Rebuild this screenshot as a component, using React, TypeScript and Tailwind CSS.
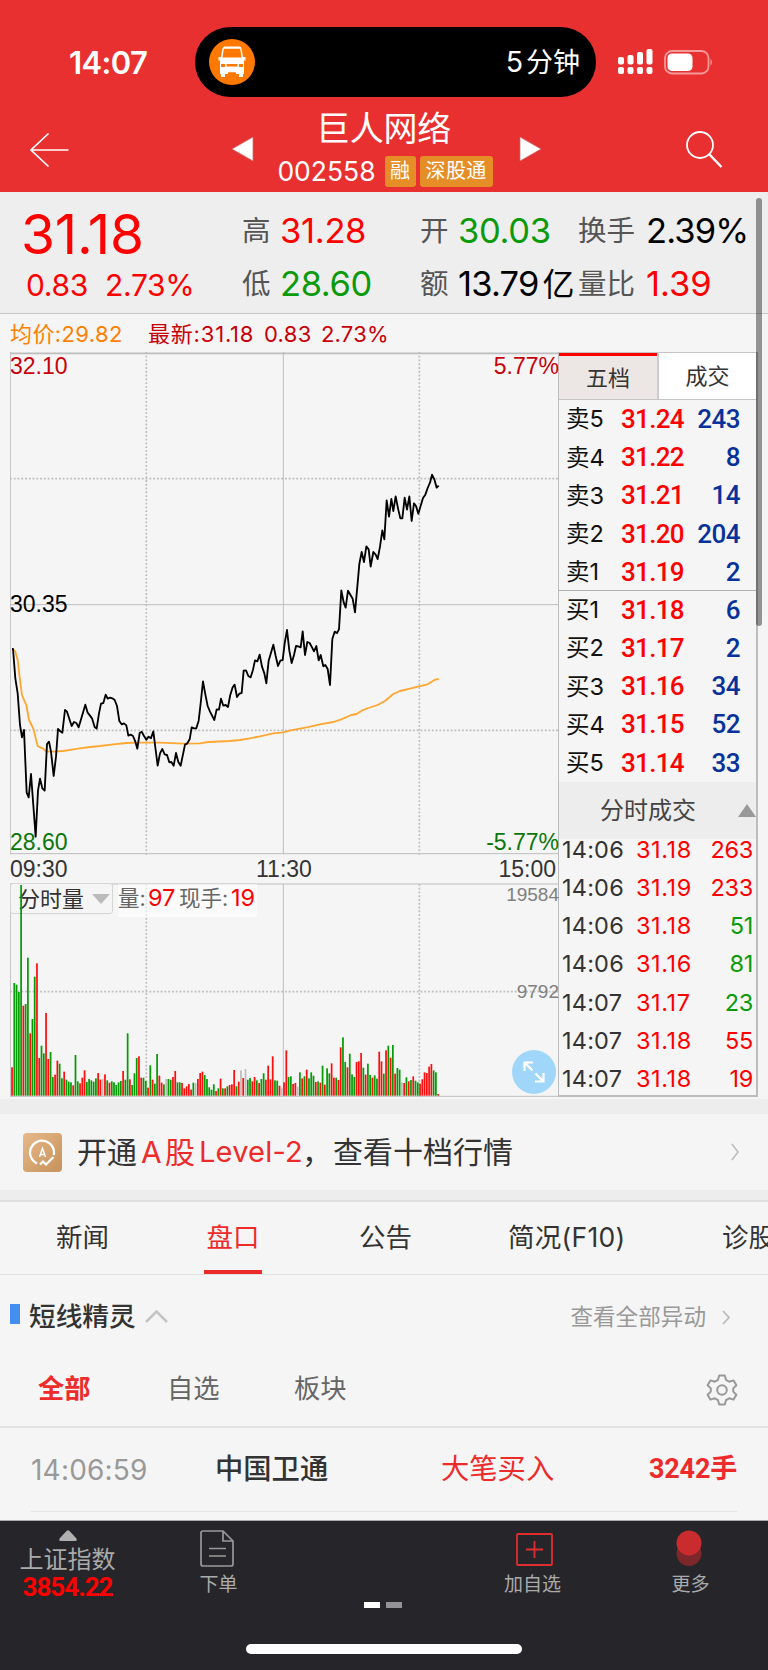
import { ReactNode } from "react";

type Side = "R" | "G" | "N";

const askRows = [
    { label: "卖5", price: "31.24", amount: "243" },
    { label: "卖4", price: "31.22", amount: "8" },
    { label: "卖3", price: "31.21", amount: "14" },
    { label: "卖2", price: "31.20", amount: "204" },
    { label: "卖1", price: "31.19", amount: "2" },
];

const bidRows = [
    { label: "买1", price: "31.18", amount: "6" },
    { label: "买2", price: "31.17", amount: "2" },
    { label: "买3", price: "31.16", amount: "34" },
    { label: "买4", price: "31.15", amount: "52" },
    { label: "买5", price: "31.14", amount: "33" },
];

const trades = [
    { time: "14:06", price: "31.18", amount: "263", up: true },
    { time: "14:06", price: "31.19", amount: "233", up: true },
    { time: "14:06", price: "31.18", amount: "51", up: false },
    { time: "14:06", price: "31.16", amount: "81", up: false },
    { time: "14:07", price: "31.17", amount: "23", up: false },
    { time: "14:07", price: "31.18", amount: "55", up: true },
    { time: "14:07", price: "31.18", amount: "19", up: true },
];

// Chart units are thirds of a pixel
const priceLine =
    "36,147 39,147 46,235 53,280 60,375 66,412 72,390 80,578 86,592 93,522 107,710 114,572 120,536 127,565 134,572 141,432 147,425 153,455 161,528 168,470 174,387 181,394 187,398 195,330 201,335 215,378 222,366 229,369 236,382 256,314 263,338 270,347 276,355 284,381 290,386 297,340 303,311 310,309 317,284 323,296 330,293 337,295 344,300 351,318 358,363 365,373 372,370 379,376 385,407 392,404 399,408 406,425 412,446 419,399 425,395 432,408 439,419 446,410 453,415 460,394 467,450 473,497 480,460 487,447 494,463 501,465 508,487 514,486 521,497 528,459 535,486 542,497 555,434 562,430 569,418 575,382 582,385 589,385 596,362 602,310 609,244 616,283 623,318 630,335 643,360 650,328 657,329 663,296 670,317 677,315 684,321 691,284 698,262 704,254 711,291 718,281 725,279 731,212 738,211 745,228 752,232 759,209 765,181 772,184 779,164 786,200 793,220 799,250 806,182 820,134 827,168 834,198 841,182 848,180 854,130 861,90 868,152 875,189 882,165 888,138 895,139 902,142 908,94 915,165 922,126 929,129 936,142 942,154 949,138 956,181 962,165 970,199 976,195 983,207 990,255 997,117 1004,95 1011,99 1017,88 1024,-29 1031,7 1037,23 1044,-28 1051,-16 1058,-4 1065,37 1072,-40 1078,-108 1085,-144 1092,-114 1099,-161 1106,-152 1112,-100 1120,-144 1127,-136 1133,-123 1140,-160 1147,-209 1153,-182 1160,-299 1167,-250 1174,-303 1180,-267 1187,-311 1194,-275 1201,-245 1207,-245 1214,-307 1221,-271 1228,-311 1235,-237 1242,-290 1248,-282 1255,-259 1269,-306 1276,-316 1283,-336 1290,-352 1296,-376 1303,-362 1310,-337 1316,-343";

const averageLine =
    "39,147 46,155 53,180 60,240 66,285 73,302 79,315 87,360 96,378 101,388 107,415 113,438 122,443 130,446 138,454 160,455 190,453 220,448 240,445 270,441 300,438 340,433 380,429 410,428 480,428 550,431 600,430 625,426 690,423 720,420 750,415 780,409 820,400 850,397 868,392 920,382 960,373 1000,366 1024,358 1054,345 1070,342 1085,332 1105,324 1133,315 1155,303 1180,282 1200,273 1230,266 1257,259 1280,254 1305,239 1316,237";

const volumes =
    "R85 G338 G333 G311 G632 R270 G275 G414 R187 G230 G357 R397 R113 G150 G127 R248 R110 G131 G56 R63 R105 G96 G52 R72 G48 G42 G40 R31 G122 G43 R37 R54 R76 G41 G50 G46 G42 G52 R68 R48 N50 R64 G46 R39 G43 G40 G32 G40 G44 R74 G48 G187 R49 G32 G67 G113 R118 R54 G54 G44 R24 G91 R48 G36 G125 R60 R39 G34 N50 G50 G48 R56 R74 G40 G40 R38 R22 R28 R35 R18 G39 N37 R50 R68 R72 G62 G50 G25 G18 G34 R14 G22 R51 G22 R22 G28 R32 R34 R77 G28 R42 N76 R53 N80 G48 G53 R43 R56 G46 R38 G50 G67 R48 R90 R49 R118 G46 G45 R30 N22 R40 R136 G56 G58 R35 R38 N27 G70 R52 G58 R78 G52 G70 G60 R41 G43 R39 G90 R33 G82 G67 R97 R54 G54 R47 R145 G175 G101 R85 G126 G64 G56 R101 R103 R128 G84 R63 G96 G62 R54 G61 G51 R132 R103 G66 R136 G150 R114 G152 R66 G83 G78 N40 R38 G55 R43 G47 R58 G45 G40 R36 R49 R70 R68 R87 R95 G76 G70 R5"
        .split(" ")
        .map((item) => ({ side: item[0] as Side, size: Number(item.slice(1)) }));

const barColors: Record<Side, string> = { R: "#ff0d0d", G: "#069a06", N: "#bdbdbd" };

function StatusBar() {
    return (
        <div className="flex h-[70px] items-center">
            <span className="ml-[69px] w-[126px] text-[31px] font-semibold tracking-[-0.600px]">
                14:07
            </span>
            <div className="flex h-[70px] w-[401px] items-center justify-between rounded-full bg-black pr-[16px] pl-[14px]">
                <svg width="46" height="46" viewBox="0 0 46 46">
                    <circle cx="23" cy="23" r="23" fill="#ff7800" />
                    <path d="M13.500 9.500q.4-2 2-2h15q1.600 0 2 2l1.500 8.500h2.500v3.500h-1.500v13.500h-1v3h-4v-3H16v3h-4v-3h-1V21.500H9.500V18H12z" fill="#fff" />
                    <path d="M14.800 9.800h16.400l1.300 8.700h-19z" fill="#ff7800" />
                    <path d="M12 25h4v3h-4zM30 25h4v3h-4zM17.500 25h11v2.500h-11zM19 33.200h8v2h-8z" fill="#ff7800" />
                </svg>
                <span className="text-[27px]"><span className="mr-[3px] text-[28.500px]">5</span>分钟</span>
            </div>
            <svg className="ml-[22px]" width="36" height="26" viewBox="0 0 36 26" fill="#fff">
                <rect x="0" y="8" width="6" height="7.500" rx="2" />
                <rect x="9.500" y="6" width="6" height="9.500" rx="2" />
                <rect x="19" y="3" width="6" height="12.500" rx="2" />
                <rect x="28.500" y="0" width="6" height="15.500" rx="2" />
                <rect x="0" y="18" width="6" height="7" rx="2" />
                <rect x="9.500" y="18" width="6" height="7" rx="2" />
                <rect x="19" y="18" width="6" height="7" rx="2" />
                <rect x="28.500" y="18" width="6" height="7" rx="2" />
            </svg>
            <svg className="ml-[10px]" width="50" height="25" viewBox="0 0 50 25">
                <rect x="1" y="1" width="43.500" height="22.500" rx="7" fill="none" stroke="#f59a9a" strokeWidth="1.800" />
                <rect x="3.500" y="3.500" width="25" height="17.500" rx="4.500" fill="#fff" />
                <path d="M46.500 8.800q3 3.500 0 7z" fill="#f59a9a" />
            </svg>
        </div>
    );
}

function TitleBar() {
    return (
        <div className="flex h-[95px] items-center">
            <svg className="mt-[10px] ml-[29px]" width="41" height="36" viewBox="0 0 41 36" fill="none" stroke="#fff" strokeWidth="1.700">
                <path d="M39.500 18H2M19.500 1.500 2 18l17.500 16.500" />
            </svg>
            <svg className="mt-[9px] ml-[161px]" width="23" height="26" viewBox="0 0 23 26">
                <path d="M1 13 22 1v24z" fill="#fff" stroke="#c96a6a" strokeWidth=".7" />
            </svg>
            <div className="ml-[24px] flex w-[214px] flex-col items-center pt-[8px]">
                <div className="-mt-[2px] mr-[3px] flex h-[40px] items-center text-[34px] tracking-[-0.300px]">巨人网络</div>
                <div className="mt-[7px] flex h-[30px] items-center gap-1">
                    <span className="mr-[5px] text-[26.500px]">002558</span>
                    <span className="flex h-[31px] w-[31px] items-center justify-center rounded-[3px] bg-[#e58e27] text-[20px]">融</span>
                    <span className="flex h-[31px] w-[73px] items-center justify-center rounded-[3px] bg-[#e58e27] text-[20px] tracking-[0.400px]">深股通</span>
                </div>
            </div>
            <svg className="mt-[9px] ml-[27px]" width="23" height="26" viewBox="0 0 23 26">
                <path d="M22 13 1 1v24z" fill="#fff" stroke="#c96a6a" strokeWidth=".7" />
            </svg>
            <svg className="mt-[9px] ml-[142px]" width="40" height="40" viewBox="0 0 40 40" fill="none" stroke="#fff">
                <circle cx="16" cy="16" r="13" strokeWidth="1.800" />
                <path d="m25 25 12.500 13" strokeWidth="2.500" />
            </svg>
        </div>
    );
}

function Quote({ label, value, className, labelClass }: { label: string; value: ReactNode; className: string; labelClass: string }) {
    return (
        <div className="flex h-[53px] items-center whitespace-nowrap">
            <span className={`shrink-0 text-[28.500px] text-[#555] ${labelClass}`}>{label}</span>
            <span className={`text-[34.500px] ${className}`}>{value}</span>
        </div>
    );
}

function QuotePanel() {
    return (
        <div className="flex h-[122px] border-b border-[#c8c8c8] bg-[#eee] pt-[13px]">
            <div className="ml-[21px] w-[221px] text-[#f00]">
                <div className="flex h-[58px] items-center text-[55px] tracking-[-0.200px]">31.18</div>
                <div className="flex h-[44px] items-center text-[30px] tracking-[-0.300px]">
                    <span className="ml-[5px] w-[79px]">0.83</span>
                    <span>2.73%</span>
                </div>
            </div>
            <div className="w-[178px]">
                <Quote label="高" value="31.28" className="tracking-[-0.300px] text-[#f00]" labelClass="w-[38px]" />
                <Quote label="低" value="28.60" className="tracking-[-0.400px] text-[#0a9a0a]" labelClass="w-[38px]" />
            </div>
            <div className="w-[158px]">
                <Quote label="开" value="30.03" className="tracking-[-0.300px] text-[#0a9a0a]" labelClass="w-[38px]" />
                <Quote label="额" value={<>13.79<span className="ml-[4px] text-[32px]">亿</span></>} className="tracking-[-0.800px] text-black" labelClass="w-[38px]" />
            </div>
            <div>
                <Quote label="换手" value="2.39%" className="tracking-[-0.900px] text-black" labelClass="w-[68px]" />
                <Quote label="量比" value="1.39" className="text-[#f00]" labelClass="w-[68px]" />
            </div>
        </div>
    );
}

function PriceChart() {
    return (
        <div className="relative h-[503px] font-['Liberation_Sans',sans-serif] text-[23px] leading-[24px]">
            <svg width="549" height="503" viewBox="0 0 1647 1509" fill="none" stroke="#bdbdbd" strokeWidth="3">
                <path d="M0 4H1645" strokeWidth="5" />
                <path d="M1 0V1507M820 0V1507M0 758H1645M0 1505H1645" />
                <path d="M409 0V1509M1228 0V1509M0 380H1645M0 1135H1645" strokeWidth="5" strokeDasharray="5.500 5.800" />
                <g transform="translate(-30 744)" strokeLinejoin="round">
                    <polyline points={averageLine} stroke="#ffa733" strokeWidth="5.500" />
                    <polyline points={priceLine} stroke="#000" strokeWidth="5.500" />
                </g>
            </svg>
            <span className="absolute top-[2px] left-0 text-[#c8000a]">32.10</span>
            <span className="absolute top-[2px] right-0 text-[#c8000a]">5.77%</span>
            <span className="absolute top-[240px] left-0 text-black">30.35</span>
            <span className="absolute top-[478px] left-0 text-[#0a760a]">28.60</span>
            <span className="absolute top-[478px] right-0 text-[#0a760a]">-5.77%</span>
        </div>
    );
}

function VolumeChart() {
    return (
        <div className="relative h-[214px]">
            <svg className="absolute inset-0" width="549" height="214" viewBox="0 0 1647 642" fill="none" stroke="#bdbdbd" strokeWidth="3">
                <path d="M0 3H1645M1 3V642M820 3V642M0 640H1645" />
                <path d="M409 3V642M1228 3V642M0 326H1645" strokeWidth="5" strokeDasharray="5.500 5.800" />
            </svg>
            <div className="absolute top-0 left-0 flex h-[31px] w-[103px] items-center justify-between rounded-[3px] border border-[#d5d5d5] bg-[#f5f5f5] pr-[2px] pl-[7px] text-[22px] text-[#333]">
                分时量
                <svg width="18" height="10" viewBox="0 0 18 10">
                    <path d="M0 0h18l-9 10z" fill="#bbb" />
                </svg>
            </div>
            <div className="absolute top-px left-[108px] flex h-[33px] w-[139px] items-start bg-white/55 text-[21.500px] leading-[28px] whitespace-nowrap text-[#666]">
                <span className="w-[30px]">量:</span>
                <span className="w-[31px] text-[23.500px] text-[#f00]">97</span>
                <span className="w-[52px]">现手:</span>
                <span className="text-[23.500px] text-[#f00]">19</span>
            </div>
            <span className="absolute top-0 right-0 font-['Liberation_Sans',sans-serif] text-[19px] leading-[24px] text-[#808080]">19584</span>
            <span className="absolute top-[97px] right-0 font-['Liberation_Sans',sans-serif] text-[19px] leading-[24px] text-[#808080]">9792</span>
            <svg className="absolute inset-0" width="549" height="214" viewBox="0 0 1647 642">
                {volumes.map((bar, i) => (
                    <rect key={i} x={3.500 + i * 6.8} y={638 - bar.size} width="5.200" height={bar.size} fill={barColors[bar.side]} />
                ))}
            </svg>
            <svg className="absolute right-[3px] bottom-[3px]" width="44" height="44" viewBox="0 0 44 44" fill="none" stroke="#fff" strokeWidth="2.200">
                <circle cx="22" cy="22" r="22" fill="#a1d6fb" stroke="none" />
                <path d="M12.500 21v-8.500H21M12.500 12.500l8 8M31.500 23v8.500H23M31.500 31.500l-8-8" />
            </svg>
        </div>
    );
}

function OrderRow({ row }: { row: { label: string; price: string; amount: string } }) {
    return (
        <div className="flex h-[38.180px] items-center pr-[16px] pl-[7px] font-['Roboto','Noto_Sans_CJK_SC',sans-serif] text-[26px] font-medium">
            <span className="w-[55px] font-['Inter','Noto_Sans_CJK_SC',sans-serif] text-[23.500px] font-normal text-[#111]">{row.label}</span>
            <span className="tracking-[-0.700px] text-[#f00]">{row.price}</span>
            <span className="ml-auto tracking-[-0.500px] text-[#08329b]">{row.amount}</span>
        </div>
    );
}

function OrderBook() {
    return (
        <div className="-ml-px h-[745px] w-[200px] border-r-2 border-b-2 border-l border-[#bdbdbd]">
            <div className="flex h-[48px] border-t border-b border-[#c4c4c4] text-[22px] text-[#333]">
                <div className="flex w-[98px] items-center justify-center border-t-[3px] border-[#f00] bg-[#ece7e4]">五档</div>
                <div className="flex flex-1 items-center justify-center border-l-2 border-[#ccc] bg-white">成交</div>
            </div>
            {askRows.map((row) => <OrderRow key={row.label} row={row} />)}
            <div className="-mt-px border-t border-[#b0b0b0]" />
            {bidRows.map((row) => <OrderRow key={row.label} row={row} />)}
            <div className="flex h-[57px] items-center bg-[#ededed] pt-[2px] pl-[41px] text-[24px] text-[#444]">
                分时成交
                <svg className="-mt-[2px] ml-auto" width="18" height="13" viewBox="0 0 18 13">
                    <path d="M9 0l9 13H0z" fill="#999" />
                </svg>
            </div>
            <div className="-mt-[8px]">
                {trades.map((trade, i) => (
                    <div key={i} className="flex h-[38.150px] items-center pr-[3px] pl-[3px] text-[23.500px]">
                        <span className="w-[74px] tracking-[0.200px] text-[#333]">{trade.time}</span>
                        <span className="tracking-[0.600px] text-[#f00]">{trade.price}</span>
                        <span className={`ml-auto tracking-[-0.300px] ${trade.up ? "text-[#f00]" : "text-[#0a9a0a]"}`}>{trade.amount}</span>
                    </div>
                ))}
            </div>
        </div>
    );
}

function Chevron({ className, color }: { className: string; color: string }) {
    return (
        <svg className={className} width="8" height="18" viewBox="0 0 8 18" fill="none" stroke={color} strokeWidth="1.500">
            <path d="m1 1 6 8-6 8" />
        </svg>
    );
}

function LevelBanner() {
    return (
        <div className="flex h-[101px] items-center border-t-[15px] border-b-[10px] border-[#ededed] pl-[23px]">
            <svg width="39" height="39" viewBox="0 0 39 39" fill="none" stroke="#fff" strokeWidth="2.200">
                <defs>
                    <linearGradient id="gold" x1="0" y1="0" x2="1" y2="1">
                        <stop offset="0" stopColor="#e6b98a" />
                        <stop offset="1" stopColor="#c6925a" />
                    </linearGradient>
                </defs>
                <rect width="39" height="39" rx="4" fill="url(#gold)" stroke="none" />
                <path d="M14 30.500A12 12 0 1 1 30.800 22M30.500 24l-7.500 7.500-3-3-3 3" />
                <path d="m16.500 24 3-8.500 3 8.500M17.500 21.500h4" strokeWidth="1.500" />
            </svg>
            <div className="ml-[15px] flex text-[30px] whitespace-nowrap text-[#333]">
                <span className="w-[64px]">开通</span>
                <span className="w-[24px] text-[#ed2b2b]">A</span>
                <span className="w-[34px] text-[#ed2b2b]">股</span>
                <span className="w-[103px] text-[29px] tracking-[0.200px] text-[#ed2b2b]">Level-2</span>
                <span className="w-[31px]">，</span>
                <span>查看十档行情</span>
            </div>
            <Chevron className="mr-[29px] ml-auto" color="#bbb" />
        </div>
    );
}

function Tabs() {
    return (
        <div className="flex h-[75px] overflow-hidden border-t-2 border-b border-[#e0e0e0] text-[26.500px] leading-[71px] whitespace-nowrap text-[#333]">
            <span className="ml-[56px] w-[148px] shrink-0">新闻</span>
            <span className="relative w-[58px] shrink-0 text-center text-[#ed2b2b]">
                盘口
                <span className="absolute bottom-0 left-0 h-[4px] w-full bg-[#ed2b2b]" />
            </span>
            <span className="ml-[97px] w-[149px] shrink-0">公告</span>
            <span className="w-[214px] shrink-0 tracking-[0.300px]">简况(F10)</span>
            <span className="shrink-0">诊股</span>
        </div>
    );
}

function ShortLine() {
    return (
        <>
            <div className="flex h-[82px] items-center text-[26.700px] font-medium text-[#333]">
                <span className="-mt-[5px] ml-[10px] h-[20px] w-[10px] bg-[#448ef0]" />
                <span className="ml-[9px]">短线精灵</span>
                <svg className="ml-[9px]" width="23" height="13" viewBox="0 0 23 13" fill="none" stroke="#c4c4c4" strokeWidth="2.500">
                    <path d="M1 12 11.500 1.500 22 12" />
                </svg>
                <span className="mt-[2px] ml-auto text-[22.600px] font-normal text-[#999]">查看全部异动</span>
                <svg className="mt-[2px] mr-[38px] ml-[16px]" width="8" height="15" viewBox="0 0 8 15" fill="none" stroke="#bbb" strokeWidth="1.800">
                    <path d="m1 1 6 6.500-6 6.500" />
                </svg>
            </div>
            <div className="flex h-[71px] items-center border-b-2 border-[#e2e2e2] pb-[4px] text-[26.300px] text-[#666]">
                <span className="ml-[38px] w-[129px] font-bold text-[#ed2b2b]">全部</span>
                <span className="w-[127px]">自选</span>
                <span>板块</span>
                <svg className="mr-[30px] ml-auto" width="32" height="32" viewBox="0 0 32 32" fill="none" stroke="#999" strokeWidth="2" strokeLinejoin="round">
                    <path d="M13.200 1.500h5.600l1.200 4.300 3.200 1.900 4.400-1.300 2.800 4.900-3.200 3.100v3.200l3.200 3.100-2.800 4.900-4.400-1.300-3.200 1.900-1.200 4.300h-5.600L12 26.200l-3.200-1.900-4.400 1.300-2.800-4.900 3.200-3.100v-3.200l-3.200-3.100 2.800-4.900 4.400 1.300L12 5.800z" />
                    <circle cx="16" cy="16" r="4.800" />
                </svg>
            </div>
            <div className="mr-[31px] ml-[31px] flex h-[84px] items-center border-b border-[#e4e4e4] text-[28.300px] text-[#ed2b2b]">
                <span className="w-[184px] text-[28px] tracking-[0.200px] text-[#999]">14:06:59</span>
                <span className="w-[226px] font-medium text-[#333]">中国卫通</span>
                <span>大笔买入</span>
                <span className="ml-auto font-['Roboto','Noto_Sans_CJK_SC',sans-serif] text-[27px] font-bold tracking-[-0.200px]">3242手</span>
            </div>
        </>
    );
}

function BottomBar() {
    return (
        <footer className="h-[150px] border-t border-[#aaa] bg-[#26262a] text-[19px] leading-[24px] text-[#aaa]">
            <div className="flex h-[80px]">
                <div className="flex w-[135px] flex-col items-center pt-[9px]">
                    <svg width="18" height="11" viewBox="0 0 18 11">
                        <path d="M7.500 1q1.500-1.500 3 0L17 8q2 3-1 3H2Q-1 11 1 8z" fill="#b0b0b0" />
                    </svg>
                    <span className="mt-[6px] text-[24px] leading-[26px]">上证指数</span>
                    <span className="font-['Roboto',sans-serif] text-[26px] leading-[28px] font-bold tracking-[-1px] text-[#f00]">3854.22</span>
                </div>
                <div className="flex w-[167px] flex-col items-center pt-[9px]">
                    <svg className="mr-[3px]" width="34" height="37" viewBox="0 0 34 37" fill="none" stroke="#999" strokeWidth="1.700">
                        <path d="M3 1h20l10 10v23q0 2-2 2H3q-2 0-2-2V3q0-2 2-2zM23 1v10h10M9 18.500h17M9 26h17" />
                    </svg>
                    <span className="mt-[6px]">下单</span>
                </div>
                <div className="ml-[149px] flex w-[163px] flex-col items-center pt-[12px]">
                    <svg className="ml-[3px]" width="37" height="33" viewBox="0 0 37 33" fill="none" stroke="#e02d30" strokeWidth="1.800">
                        <rect x="1" y="1" width="35" height="31" rx="1" />
                        <path d="M18.500 8v17M10 16.500h17" />
                    </svg>
                    <span className="mt-[7px]">加自选</span>
                </div>
                <div className="flex w-[153px] flex-col items-center pt-[9px]">
                    <svg className="mr-[3px]" width="26" height="37" viewBox="0 0 26 37">
                        <circle cx="13" cy="23.500" r="12.500" fill="#7d272b" />
                        <circle cx="13" cy="13" r="12.500" fill="#c92b2e" />
                    </svg>
                    <span className="mt-[6px]">更多</span>
                </div>
            </div>
            <div className="ml-[364px] flex gap-[6px] pt-px">
                <span className="h-[6px] w-[16px] bg-white" />
                <span className="h-[6px] w-[16px] bg-[#949496]" />
            </div>
            <div className="mt-[36px] ml-[246px] h-[10px] w-[276px] rounded-full bg-white" />
        </footer>
    );
}

export default function App() {
    return (
        <div className="relative h-[1670px] w-[768px] overflow-hidden bg-[#f5f5f5] font-['Inter','Noto_Sans_CJK_SC',sans-serif] leading-none">
            <header className="h-[192px] bg-[#e93030] pt-[27px] text-white">
                <StatusBar />
                <TitleBar />
            </header>
            <QuotePanel />
            <div className="flex h-[39px] items-center text-[22px] whitespace-nowrap text-[#c8000a]">
                <span className="ml-[10px] w-[138px] tracking-[0.400px] text-[#ff8000]">均价:29.82</span>
                <span className="w-[116px] tracking-[0.800px]">最新:31.18</span>
                <span className="w-[57px] tracking-[0.300px]">0.83</span>
                <span className="tracking-[0.200px]">2.73%</span>
            </div>
            <main className="-mt-px ml-[10px] flex">
                <div className="w-[549px]">
                    <PriceChart />
                    <div className="flex h-[28px] items-center font-['Liberation_Sans',sans-serif] text-[23px] text-[#333]">
                        <span className="w-[246px]">09:30</span>
                        <span>11:30</span>
                        <span className="mr-[3px] ml-auto">15:00</span>
                    </div>
                    <VolumeChart />
                </div>
                <OrderBook />
            </main>
            <div className="h-[2px]" />
            <LevelBanner />
            <Tabs />
            <ShortLine />
            <div className="h-[8px]" />
            <BottomBar />
            <div className="absolute top-[198px] right-[6px] h-[428px] w-[6px] rounded-full bg-black/40" />
        </div>
    );
}
